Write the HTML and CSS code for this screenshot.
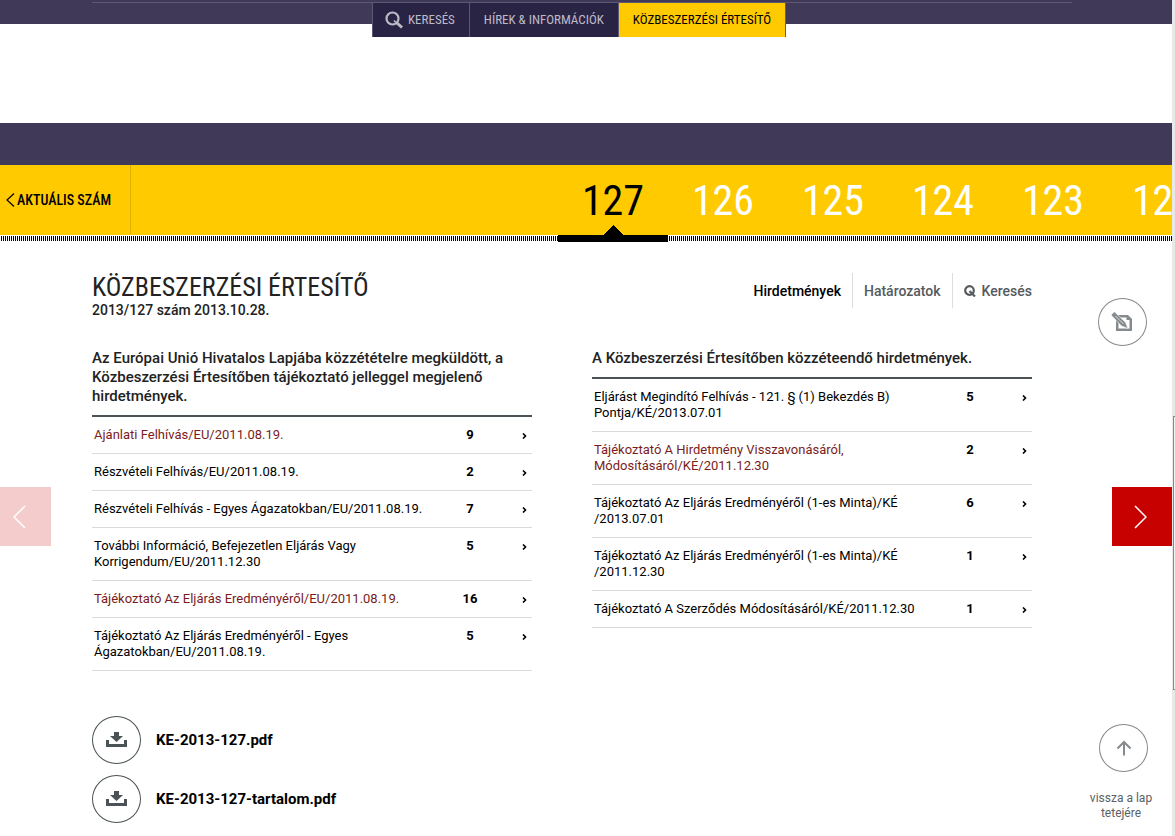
FILE: index.html
```html
<!DOCTYPE html>
<html lang="hu">
<head>
<meta charset="utf-8">
<title>Közbeszerzési Értesítő</title>
<link rel="stylesheet" href="styles.css">
</head>
<body>
<div class="page">
  <header class="top">
    <div class="container">
      <nav class="main-nav">
        <a href="#kereses"><svg width="18" height="18" viewBox="0 0 18 18" fill="none" stroke="currentColor"><circle cx="7.500" cy="7.500" r="6" stroke-width="2.200"/><path d="M9 9.500l2 2" stroke-width="1.500"/><path d="M12 12l5 4.500" stroke-width="3"/></svg>KERESÉS</a>
        <a href="#hirek">HÍREK &amp; INFORMÁCIÓK</a>
        <a class="current" href="#ertesito">KÖZBESZERZÉSI ÉRTESÍTŐ</a>
      </nav>
    </div>
  </header>
  <div class="band"></div>
  <div class="issues">
    <a class="latest" href="#aktualis"><svg width="9" height="14" viewBox="0 0 9 14" fill="none" stroke="currentColor" stroke-width="1.200"><path d="M8 .5L1 7l7 6.500"/></svg>AKTUÁLIS SZÁM</a>
    <nav class="numbers">
      <a class="active" href="#127">127</a>
      <a href="#126">126</a>
      <a href="#125">125</a>
      <a href="#124">124</a>
      <a href="#123">123</a>
      <a href="#122">122</a>
    </nav>
  </div>
  <main class="container content">
    <div class="title-row">
      <div>
        <h1>KÖZBESZERZÉSI ÉRTESÍTŐ</h1>
        <p class="issue-date">2013/127 szám 2013.10.28.</p>
      </div>
      <nav class="sub-nav">
        <a class="selected" href="#hirdetmenyek">Hirdetmények</a>
        <a href="#hatarozatok">Határozatok</a>
        <a href="#lapkereses"><svg width="12" height="12" viewBox="0 0 12 12" fill="none" stroke="currentColor"><circle cx="5.500" cy="5.500" r="4.300" stroke-width="2.200"/><path d="M5.500 6L11 11.500" stroke-width="2.200"/></svg>Keresés</a>
      </nav>
    </div>
    <div class="columns">
      <section>
        <h2>Az Európai Unió Hivatalos Lapjába közzétételre megküldött, a Közbeszerzési Értesítőben tájékoztató jelleggel megjelenő hirdetmények.</h2>
        <table>
          <tr><td><a class="visited" href="#e1">Ajánlati Felhívás/EU/2011.08.19.</a></td><td class="count">9</td><td class="go"><svg width="5" height="6" viewBox="0 0 5 6"><path d="M1 .5L3.500 3 1 5.500"/></svg></td></tr>
          <tr><td><a href="#e2">Részvételi Felhívás/EU/2011.08.19.</a></td><td class="count">2</td><td class="go"><svg width="5" height="6" viewBox="0 0 5 6"><path d="M1 .5L3.500 3 1 5.500"/></svg></td></tr>
          <tr><td><a href="#e3">Részvételi Felhívás - Egyes Ágazatokban/EU/2011.08.19.</a></td><td class="count">7</td><td class="go"><svg width="5" height="6" viewBox="0 0 5 6"><path d="M1 .5L3.500 3 1 5.500"/></svg></td></tr>
          <tr><td><a href="#e4">További Információ, Befejezetlen Eljárás Vagy<br>Korrigendum/EU/2011.12.30</a></td><td class="count">5</td><td class="go"><svg width="5" height="6" viewBox="0 0 5 6"><path d="M1 .5L3.500 3 1 5.500"/></svg></td></tr>
          <tr><td><a class="visited" href="#e5">Tájékoztató Az Eljárás Eredményéről/EU/2011.08.19.</a></td><td class="count">16</td><td class="go"><svg width="5" height="6" viewBox="0 0 5 6"><path d="M1 .5L3.500 3 1 5.500"/></svg></td></tr>
          <tr><td><a href="#e6">Tájékoztató Az Eljárás Eredményéről - Egyes<br>Ágazatokban/EU/2011.08.19.</a></td><td class="count">5</td><td class="go"><svg width="5" height="6" viewBox="0 0 5 6"><path d="M1 .5L3.500 3 1 5.500"/></svg></td></tr>
        </table>
      </section>
      <section>
        <h2>A Közbeszerzési Értesítőben közzéteendő hirdetmények.</h2>
        <table>
          <tr><td><a href="#k1">Eljárást Megindító Felhívás - 121. § (1) Bekezdés B)<br>Pontja/KÉ/2013.07.01</a></td><td class="count">5</td><td class="go"><svg width="5" height="6" viewBox="0 0 5 6"><path d="M1 .5L3.500 3 1 5.500"/></svg></td></tr>
          <tr><td><a class="visited" href="#k2">Tájékoztató A Hirdetmény Visszavonásáról,<br>Módosításáról/KÉ/2011.12.30</a></td><td class="count">2</td><td class="go"><svg width="5" height="6" viewBox="0 0 5 6"><path d="M1 .5L3.500 3 1 5.500"/></svg></td></tr>
          <tr><td><a href="#k3">Tájékoztató Az Eljárás Eredményéről (1-es Minta)/KÉ<br>/2013.07.01</a></td><td class="count">6</td><td class="go"><svg width="5" height="6" viewBox="0 0 5 6"><path d="M1 .5L3.500 3 1 5.500"/></svg></td></tr>
          <tr><td><a href="#k4">Tájékoztató Az Eljárás Eredményéről (1-es Minta)/KÉ<br>/2011.12.30</a></td><td class="count">1</td><td class="go"><svg width="5" height="6" viewBox="0 0 5 6"><path d="M1 .5L3.500 3 1 5.500"/></svg></td></tr>
          <tr><td><a href="#k5">Tájékoztató A Szerződés Módosításáról/KÉ/2011.12.30</a></td><td class="count">1</td><td class="go"><svg width="5" height="6" viewBox="0 0 5 6"><path d="M1 .5L3.500 3 1 5.500"/></svg></td></tr>
        </table>
      </section>
    </div>
    <div class="downloads">
      <a href="#pdf1"><span class="ring"><svg width="21" height="16" viewBox="0 0 21 16" fill="currentColor"><path d="M8 0h5v4h4l-6.500 6L4 4h4zM0 8h3v4h15V8h3v7H0z"/></svg></span>KE-2013-127.pdf</a>
      <a href="#pdf2"><span class="ring"><svg width="21" height="16" viewBox="0 0 21 16" fill="currentColor"><path d="M8 0h5v4h4l-6.500 6L4 4h4zM0 8h3v4h15V8h3v7H0z"/></svg></span>KE-2013-127-tartalom.pdf</a>
    </div>
  </main>
  <button class="pager prev" aria-label="Előző"><svg width="13" height="24" viewBox="0 0 13 24"><path d="M12 1L1 12l11 11"/></svg></button>
  <button class="pager next" aria-label="Következő"><svg width="13" height="24" viewBox="0 0 13 24"><path d="M1 1l11 11L1 23"/></svg></button>
  <button class="ring edit" aria-label="Szerkesztés"><svg width="24" height="22" viewBox="0 0 24 22"><path d="M5 4h12l4 4v12H5z M7.500 6.500v11h11V9H15.500V6.500z" fill="currentColor" fill-rule="evenodd"/><path d="M0 4L3.500.8l11 10.700 2.500 6-6.500-2.500z" fill="currentColor" stroke="#fff" stroke-width=".6"/><path d="M4.500 5l8 8" stroke="#fff" stroke-width=".7"/></svg></button>
  <a class="to-top" href="#top"><span class="ring"><svg width="16" height="16" viewBox="0 0 16 16" fill="none" stroke="currentColor" stroke-width="2"><path d="M8 15.500V2M1.500 8.500L8 2l6.500 6.500"/></svg></span>vissza a lap<br>tetejére</a>
</div>
<div class="scroll-track"><div class="scroll-thumb"></div></div>
</body>
</html>
```
FILE: styles.css
```css
* { box-sizing: border-box; }
body { margin: 0; display: flex; min-height: 100vh; background: #fff; color: #222; font: 500 14px/16px Roboto, "Liberation Sans", sans-serif; }
a { color: inherit; text-decoration: none; }
h1, h2, p { margin: 0; }
button { padding: 0; border: 0; cursor: pointer; }
.page { position: relative; flex: 1; min-width: 0; }
.container { max-width: 988px; margin: 0 auto; }
.main-nav, .latest, .numbers, h1 { font-family: "Roboto Condensed", Roboto, "Liberation Sans", sans-serif; }

.top { height: 24px; padding-top: 2px; margin-bottom: 99px; background: #403a58; }
.top .container { padding: 1px 8px 0 0; background: linear-gradient(#5d5873, #5d5873) 0 0 / calc(100% - 8px) 1px no-repeat; }
.main-nav { display: flex; width: max-content; margin-left: 280px; border: solid #5d5873; border-width: 0 1px; font-size: 13px; font-weight: 400; color: #bdbbc8; }
.main-nav a { display: flex; align-items: center; gap: 5px; height: 34px; padding: 0 14px; background: #2a2444; }
.main-nav a:first-child { padding-left: 12px; }
.main-nav a + a { border-left: 1px solid #5d5873; }
.main-nav .current { background: #ffcb00; color: #000; }

.band { height: 42px; background: #403a58; }
.issues { display: flex; height: 77px; overflow: hidden; background: repeating-linear-gradient(90deg, #fff 0 1px, #000 1px 2px) 0 71px / 100% 5px no-repeat, linear-gradient(#ffcb00, #ffcb00) 0 0 / 100% 70px no-repeat; }
.latest { display: flex; flex: none; align-items: center; gap: 2px; width: 131px; height: 69px; padding-left: 6px; border-right: 1px solid #dbae00; color: #000; font-size: 14px; }
.numbers { display: flex; margin-left: auto; width: 614px; flex: none; }
.numbers a { flex: none; width: 110px; padding-top: 13px; text-align: center; color: #fff; font-size: 42px; line-height: 46px; font-weight: 400; }
.numbers .active { color: #000; background: conic-gradient(from 135deg at 50% 0, #000 90deg, transparent 0) 50% 60px / 20px 10px no-repeat, linear-gradient(#000, #000) 0 70px / 100% 7px no-repeat; }

.content { padding: 31px 48px 0 0; }
.title-row { display: flex; justify-content: space-between; margin-bottom: 30px; }
h1 { font-size: 26px; line-height: 28px; font-weight: 400; }
.issue-date { line-height: 18px; }
.sub-nav { display: flex; color: #555a5e; }
.sub-nav a { display: flex; align-items: center; gap: 6px; height: 35px; padding: 0 11px; border-left: 1px solid #ddd; }
.sub-nav a:first-child { border: 0; }
.sub-nav a:last-child { padding-right: 0; }
.sub-nav .selected { color: #000; }

.columns { display: grid; grid-template-columns: 1fr 1fr; gap: 60px; }
h2 { padding-bottom: 9px; border-bottom: 2px solid #4b5356; font-size: 15px; line-height: 19px; font-weight: 500; }
table { width: 100%; border-collapse: collapse; table-layout: fixed; font-size: 13px; color: #000; }
td { padding: 10px 0 10px 2px; border-bottom: 1px solid #dbdbdb; vertical-align: top; font-weight: 400; }
.count { width: 78px; padding: 10px 0; text-align: center; font-weight: 700; }
.go { width: 23px; padding: 10px 5px 10px 0; text-align: right; }
.go svg { fill: none; stroke: #000; stroke-width: 1.6; }
.visited { color: #7a1c1c; }

.downloads { display: flex; flex-direction: column; gap: 11px; margin-top: 45px; }
.downloads a { display: flex; align-items: center; gap: 15px; width: max-content; color: #000; font-size: 15px; font-weight: 700; }
.downloads .ring { color: #4b5356; }
.ring { display: flex; align-items: center; justify-content: center; width: 49px; height: 48px; border: 1px solid currentColor; border-radius: 50%; background: #fff; color: #858a8d; }

.pager { position: absolute; top: 487px; height: 59px; display: flex; align-items: center; justify-content: center; background: #c70000; }
.pager svg { fill: none; stroke: #fff; stroke-width: 1.5; }
.prev { left: 0; width: 51px; padding-right: 12px; background: #f4cccc; }
.next { right: 0; width: 60px; padding-right: 4px; }
.edit { position: absolute; top: 298px; right: 25px; border: 1px solid #858a8d; }
.to-top { position: absolute; top: 724px; right: 11px; width: 80px; display: flex; flex-direction: column; align-items: center; color: #5c6164; text-align: center; font-size: 12px; line-height: 15px; font-weight: 400; }
.to-top .ring { margin: 0 0 19px 5px; }

.scroll-track { flex: none; width: 3px; padding-top: 416px; background: #e8e8e8; }
.scroll-thumb { height: 274px; margin-left: 1px; border: 1px solid #888; border-right: 0; background: #f5f5f5; }
```
